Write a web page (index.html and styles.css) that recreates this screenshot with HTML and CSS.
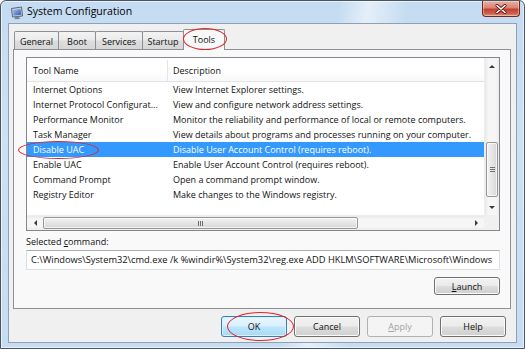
FILE: index.html
```html
<!DOCTYPE html>
<html>
<head>
<meta charset="utf-8">
<title>System Configuration</title>
<link rel="stylesheet" href="styles.css">
</head>
<body>
<div class="window">
  <div class="titlebar">
    <svg class="appicon" width="14" height="14" viewBox="0 0 14 14">
      <defs>
        <linearGradient id="scr" x1="0" y1="0" x2="1" y2="1">
          <stop offset="0" stop-color="#9fc3f0"/>
          <stop offset="1" stop-color="#2b57b8"/>
        </linearGradient>
      </defs>
      <path d="M1.5 2.5 L11.5 1 L12.5 10 L2.5 11 Z" fill="#c9ced6" stroke="#5b6678" stroke-width="1"/>
      <path d="M3 4 L10.5 3 L11.2 8.8 L3.7 9.5 Z" fill="url(#scr)"/>
      <path d="M5 11 L9 10.6 L10 13 L4.5 13.3 Z" fill="#7b8596"/>
    </svg>
    <span class="title">System Configuration</span>
    <div class="close">
      <svg width="12" height="10" viewBox="0 0 12 10">
        <path d="M2 1.5 L10 8.5 M10 1.5 L2 8.5" stroke="#5a1410" stroke-width="3" stroke-linecap="round"/>
        <path d="M2 1.5 L10 8.5 M10 1.5 L2 8.5" stroke="#ffffff" stroke-width="1.6" stroke-linecap="round"/>
      </svg>
    </div>
  </div>
  <div class="client">
    <div class="tabs">
      <div class="tab tab-general">General</div>
      <div class="tab tab-boot">Boot</div>
      <div class="tab tab-services">Services</div>
      <div class="tab tab-startup">Startup</div>
      <div class="tab tab-tools active">Tools</div>
    </div>
    <div class="panel">
      <div class="list">
        <div class="list-main">
          <div class="list-body">
            <div class="header">
              <div class="c1">Tool Name</div>
              <div class="c2">Description</div>
            </div>
            <div class="row"><div class="c1">Internet Options</div><div class="c2">View Internet Explorer settings.</div></div>
            <div class="row"><div class="c1">Internet Protocol Configurat...</div><div class="c2">View and configure network address settings.</div></div>
            <div class="row"><div class="c1">Performance Monitor</div><div class="c2">Monitor the reliability and performance of local or remote computers.</div></div>
            <div class="row"><div class="c1">Task Manager</div><div class="c2">View details about programs and processes running on your computer.</div></div>
            <div class="row selected"><div class="c1">Disable UAC</div><div class="c2">Disable User Account Control (requires reboot).</div></div>
            <div class="row"><div class="c1">Enable UAC</div><div class="c2">Enable User Account Control (requires reboot).</div></div>
            <div class="row"><div class="c1">Command Prompt</div><div class="c2">Open a command prompt window.</div></div>
            <div class="row"><div class="c1">Registry Editor</div><div class="c2">Make changes to the Windows registry.</div></div>
          </div>
          <div class="vscroll">
            <div class="sbtn"><span class="arr arr-up"></span></div>
            <div class="vtrack">
              <div class="vthumb" style="margin-top:68px"><span class="grip-h"></span></div>
            </div>
            <div class="sbtn"><span class="arr arr-down"></span></div>
          </div>
        </div>
        <div class="hbar">
          <div class="hscroll">
            <div class="sbtn sbtn-h"><span class="arr arr-left"></span></div>
            <div class="htrack">
              <div class="hthumb" style="width:315px"><span class="grip-v"></span></div>
            </div>
            <div class="sbtn sbtn-h"><span class="arr arr-right"></span></div>
          </div>
          <div class="corner"></div>
        </div>
      </div>
      <div class="label">Selected <u>c</u>ommand:</div>
      <div class="cmdbox">C:\Windows\System32\cmd.exe /k %windir%\System32\reg.exe ADD HKLM\SOFTWARE\Microsoft\Windows</div>
      <div class="launch-row">
        <div class="btn"><u>L</u>aunch</div>
      </div>
    </div>
    <div class="buttons">
      <div class="btn btn-default">OK</div>
      <div class="btn">Cancel</div>
      <div class="btn btn-disabled"><u>A</u>pply</div>
      <div class="btn">Help</div>
    </div>
  </div>
</div>
<div class="mark mark-tools"></div>
<div class="mark mark-uac"></div>
<div class="mark mark-ok"></div>
</body>
</html>
```

FILE: styles.css
```css
* { box-sizing: border-box; }

html, body {
  margin: 0;
  padding: 0;
}

body {
  width: 525px;
  height: 349px;
  overflow: hidden;
  position: relative;
  background: #ffffff;
  font-family: "Open Sans", "Noto Sans", sans-serif;
  font-size: 9px;
  color: #111;
}

.window {
  width: 525px;
  height: 349px;
  border: 1px solid #4a5563;
  border-radius: 6px 6px 0 0;
  padding: 0 7px 5px 7px;
  display: flex;
  flex-direction: column;
  background:
    linear-gradient(100deg, rgba(255,255,255,0) 0%, rgba(255,255,255,0) 58%, rgba(255,255,255,0.55) 63%, rgba(255,255,255,0) 70%, rgba(255,255,255,0) 100%),
    linear-gradient(180deg, #c4dbf1 0%, #cde1f4 40%, #c6dcf1 100%);
  box-shadow: inset 0 0 0 1px rgba(255,255,255,0.6);
}

/* ---- title bar ---- */
.titlebar {
  height: 22px;
  display: flex;
  align-items: flex-start;
}

.appicon {
  margin: 5px 0 0 2px;
  flex: none;
}

.title {
  margin: 4px 0 0 3px;
  font-size: 10.5px;
  color: #000;
  line-height: 13px;
}

.close {
  margin-left: auto;
  margin-right: -3px;
  width: 38px;
  height: 16px;
  border: 1px solid #6b2a25;
  border-top: none;
  border-radius: 0 0 4px 4px;
  background: linear-gradient(180deg, #e8b2a6 0%, #d98474 45%, #c4412f 55%, #d0634e 85%, #e39a82 100%);
  box-shadow: inset 0 0 0 1px rgba(255,255,255,0.35);
  display: flex;
  align-items: center;
  justify-content: center;
}

/* ---- client area ---- */
.client {
  flex: 1;
  background: #f0f0f0;
  border: 1px solid #8fa1b6;
  padding: 5px 5px 0 4px;
  display: flex;
  flex-direction: column;
}

.tabs {
  height: 20px;
  display: flex;
  align-items: flex-end;
  padding-left: 1px;
  position: relative;
  z-index: 2;
}

.tab {
  height: 18px;
  border: 1px solid #8d9097;
  border-bottom: none;
  margin-left: -1px;
  background: linear-gradient(180deg, #f3f3f3 0%, #ebebeb 45%, #dddddd 55%, #d6d6d6 100%);
  border-radius: 2px 2px 0 0;
  display: flex;
  align-items: center;
  justify-content: center;
  color: #111;
  padding-top: 1px;
}
.tab:first-child { margin-left: 0; }

.tab-general { width: 45px; }
.tab-boot { width: 38px; }
.tab-services { width: 48px; }
.tab-startup { width: 42px; }
.tab-tools { width: 42px; }

.tab.active {
  height: 21px;
  margin-bottom: -1px;
  background: #f9f9f9;
  padding-top: 0;
  padding-bottom: 2px;
}

.panel {
  border: 1px solid #8d9097;
  background: #f9f9f9;
  margin-right: 0;
  padding: 7px 10px 13px 12px;
  display: flex;
  flex-direction: column;
}

/* ---- list view ---- */
.list {
  height: 174px;
  border: 1px solid #828790;
  background: #ffffff;
  display: flex;
  flex-direction: column;
}

.list-main {
  height: 157px;
  display: flex;
}

.list-body {
  flex: 1;
  overflow: hidden;
  white-space: nowrap;
}

.header {
  height: 24px;
  display: flex;
  align-items: center;
  border-bottom: 1px solid #e3e3e3;
  background: linear-gradient(180deg, #ffffff 0%, #ffffff 60%, #f7f8fa 100%);
  padding-top: 2px;
}

.header .c1 {
  align-self: stretch;
  display: flex;
  align-items: center;
  border-right: 1px solid #e5e5e5;
}

.c1 {
  width: 141px;
  flex: none;
  padding-left: 6px;
  overflow: hidden;
}

.c2 {
  padding-left: 5px;
}

.row {
  height: 15px;
  display: flex;
  align-items: center;
  line-height: 15px;
}

.row.selected {
  background: #3399ff;
  color: #ffffff;
}

/* ---- scrollbars ---- */
.vscroll {
  width: 15px;
  flex: none;
  display: flex;
  flex-direction: column;
  background: linear-gradient(90deg, #e9e9e9 0%, #f6f6f6 25%, #f6f6f6 75%, #ececec 100%);
  border-left: 1px solid #ededed;
}

.sbtn {
  height: 16px;
  flex: none;
  display: flex;
  align-items: center;
  justify-content: center;
}

.sbtn-h {
  width: 16px;
  height: auto;
}

.vtrack {
  flex: 1;
  display: flex;
  flex-direction: column;
}

.vthumb {
  height: 55px;
  margin: 0 1px;
  border: 1px solid #979797;
  border-radius: 2px;
  background: linear-gradient(90deg, #f2f2f2 0%, #e6e6e6 50%, #d6d6d6 100%);
  box-shadow: inset 0 0 0 1px rgba(255,255,255,0.7);
  display: flex;
  align-items: center;
  justify-content: center;
}

.grip-h {
  width: 5px;
  height: 5px;
  background: repeating-linear-gradient(180deg, #6f6f6f 0, #6f6f6f 1px, transparent 1px, transparent 2px);
}

.hbar {
  height: 15px;
  display: flex;
}

.hscroll {
  flex: 1;
  display: flex;
  background: linear-gradient(180deg, #e9e9e9 0%, #f6f6f6 25%, #f6f6f6 75%, #ececec 100%);
  border-top: 1px solid #ededed;
}

.htrack {
  flex: 1;
  display: flex;
}

.hthumb {
  margin: 1px 0;
  border: 1px solid #979797;
  border-radius: 2px;
  background: linear-gradient(180deg, #f2f2f2 0%, #e6e6e6 50%, #d6d6d6 100%);
  box-shadow: inset 0 0 0 1px rgba(255,255,255,0.7);
  display: flex;
  align-items: center;
  justify-content: center;
}

.grip-v {
  width: 5px;
  height: 5px;
  background: repeating-linear-gradient(90deg, #6f6f6f 0, #6f6f6f 1px, transparent 1px, transparent 2px);
}

.corner {
  width: 15px;
  flex: none;
  background: #f0f0f0;
}

.arr {
  width: 0;
  height: 0;
  border-style: solid;
  border-color: transparent;
}
.arr-up { border-width: 0 3px 3px 3px; border-bottom-color: #3a3a3a; }
.arr-down { border-width: 3px 3px 0 3px; border-top-color: #3a3a3a; }
.arr-left { border-width: 3px 3px 3px 0; border-right-color: #3a3a3a; }
.arr-right { border-width: 3px 0 3px 3px; border-left-color: #3a3a3a; }

/* ---- command area ---- */
.label {
  margin-top: 5px;
  height: 12px;
  line-height: 12px;
}

.cmdbox {
  margin-top: 2px;
  height: 20px;
  border: 1px solid #dbdfe6;
  border-top-color: #abadb3;
  background: #ffffff;
  padding-left: 4px;
  font-size: 9.3px;
  line-height: 18px;
  white-space: nowrap;
  overflow: hidden;
}

.launch-row {
  margin-top: 7px;
  display: flex;
  justify-content: flex-end;
}

.launch-row .btn {
  height: 18px;
}

/* ---- buttons ---- */
.btn {
  width: 66px;
  height: 21px;
  border: 1px solid #707070;
  border-radius: 3px;
  background: linear-gradient(180deg, #f2f2f2 0%, #ebebeb 48%, #dddddd 52%, #cfcfcf 100%);
  box-shadow: inset 0 0 0 1px #fbfbfb;
  display: flex;
  align-items: center;
  justify-content: center;
  color: #111;
}

.btn-default {
  border-color: #3c7fb1;
  background: linear-gradient(180deg, #eaf6fd 0%, #d9f0fc 48%, #bee6fd 52%, #a7d9f5 100%);
  box-shadow: inset 0 0 0 1px #d6f0ff;
}

.btn-disabled {
  border-color: #adb2b5;
  background: #f4f4f4;
  color: #a3a3a3;
  box-shadow: none;
}

.buttons {
  margin-top: 7px;
  margin-right: 5px;
  display: flex;
  justify-content: flex-end;
  gap: 7px;
}

/* ---- annotation marks ---- */
.mark {
  position: absolute;
  z-index: 10;
  border: 1.5px solid #e0242a;
  border-radius: 50%;
}
.mark-tools { left: 183px; top: 28px; width: 44px; height: 22px; }
.mark-uac { left: 18px; top: 141px; width: 81px; height: 18px; }
.mark-ok { left: 227px; top: 312px; width: 67px; height: 29px; }
```
